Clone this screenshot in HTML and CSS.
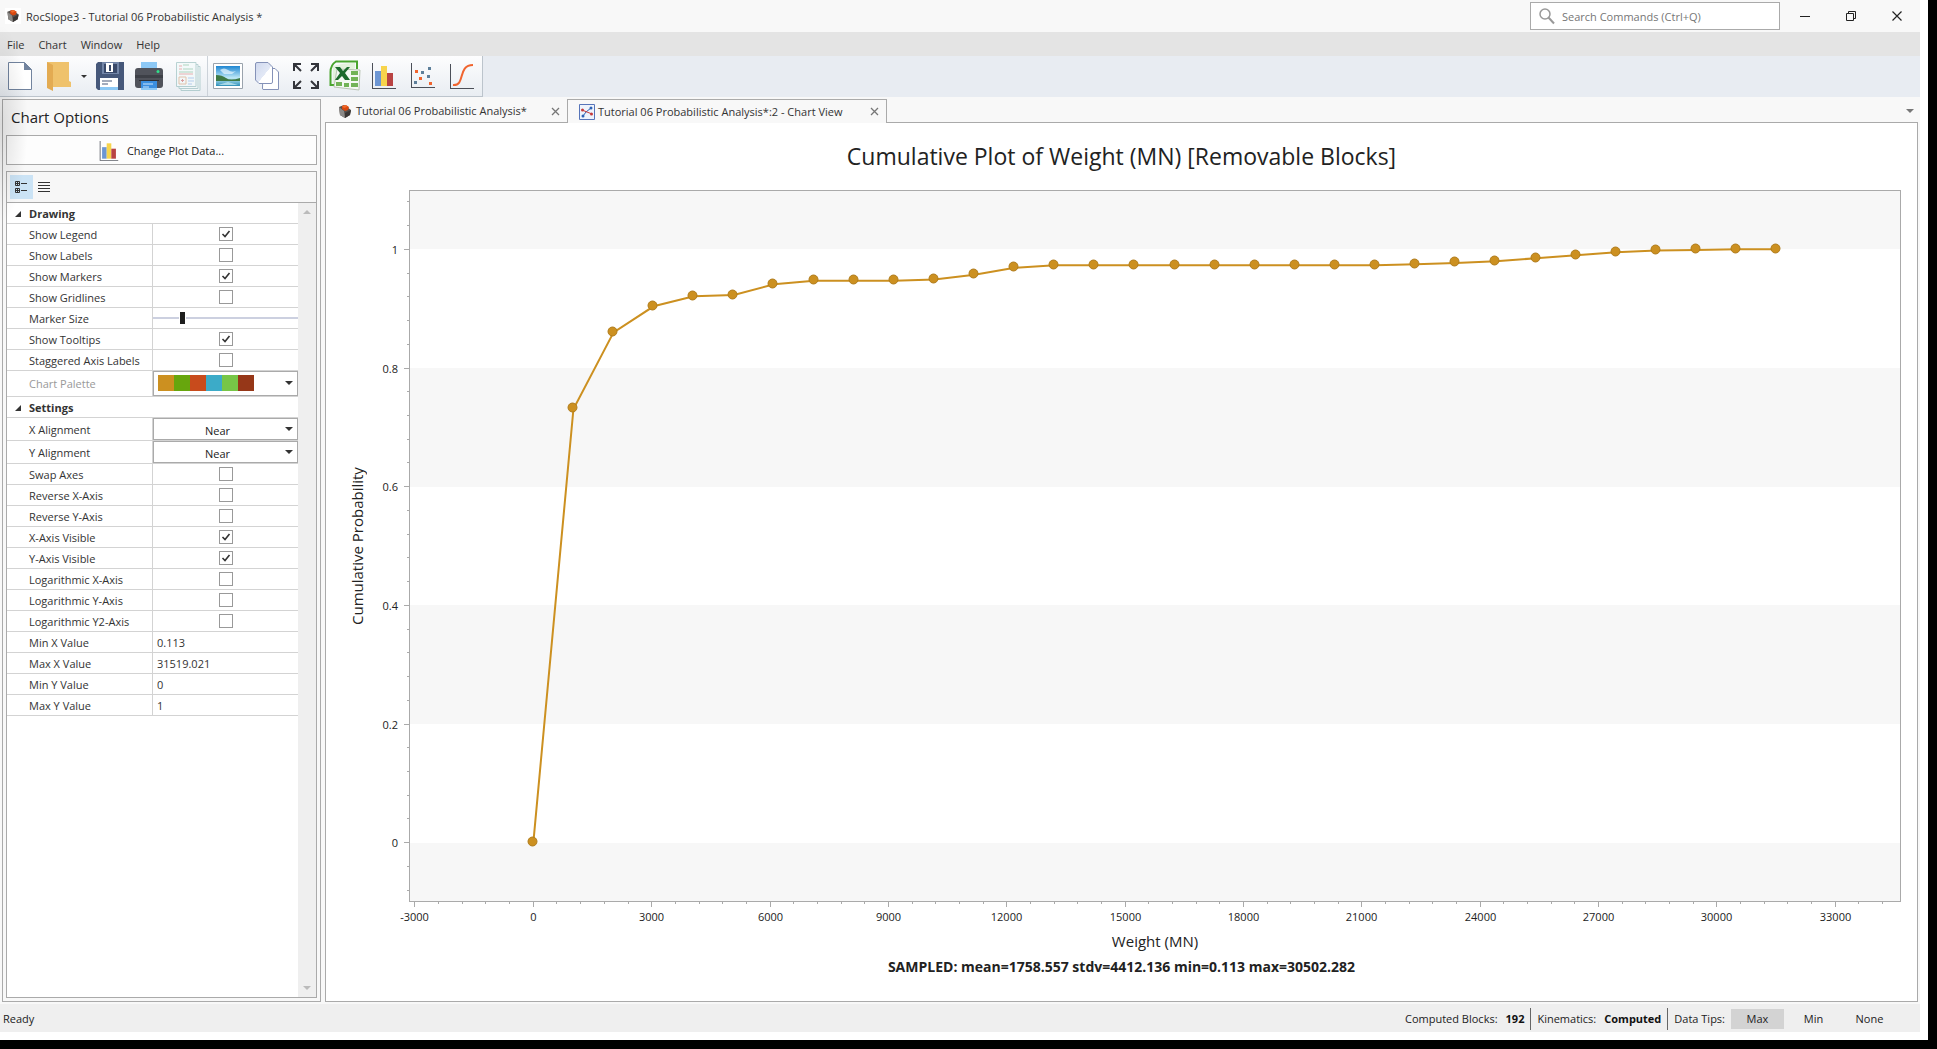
FILE: index.html
```html
<!DOCTYPE html>
<html lang="en">
<head>
<meta charset="utf-8">
<title>RocSlope3 - Tutorial 06 Probabilistic Analysis *</title>
<link rel="stylesheet" href="styles.css">
</head>
<body>
<svg class="defs" aria-hidden="true">
  <defs>
    <linearGradient id="sky" x1="0" y1="0" x2="0" y2="1"><stop offset="0" stop-color="#1e86d2"/><stop offset=".6" stop-color="#bfe9f7"/><stop offset="1" stop-color="#2e8fb8"/></linearGradient>
    <linearGradient id="sheet" x1="0" y1="0" x2="1" y2="1"><stop offset="0" stop-color="#cfd8ee"/><stop offset=".55" stop-color="#e3e9f6"/><stop offset=".56" stop-color="#fff"/></linearGradient>
    <symbol id="rock" viewBox="0 0 14 15">
      <path d="M1 3 6 1 13 6 12 11 7 14 2 11Z" fill="#55504d"/>
      <path d="M1 3 6 7 7 14 2 11Z" fill="#8b8987"/>
      <path d="M7 9 13 6 12 11 7 14Z" fill="#3a3634"/>
      <path d="M4 2 8 1 11 3 10 6 7 7 4 5Z" fill="#d9480f"/>
      <path d="M4 2 8 1 9 3 6 4Z" fill="#f26a2a"/>
    </symbol>
    <symbol id="bars" viewBox="0 0 24 26">
      <path d="M.5 0V25M0 25.5H24" stroke="#4b4f58" fill="none"/>
      <path d="M3 8h6v15H3z" fill="#6d96d3"/><path d="M9 3h6v20H9z" fill="#f7d44c"/><path d="M15 10h6v13h-6z" fill="#b94343"/>
    </symbol>
    <symbol id="cross" viewBox="0 0 9 9"><path d="M1 1 8 8M8 1 1 8" stroke="currentColor" stroke-width="1.3" fill="none"/></symbol>
    <symbol id="down" viewBox="0 0 8 4"><path d="M0 0H8L4 4Z" fill="currentColor"/></symbol>
  </defs>
</svg>
<div class="window">
  <header class="titlebar">
    <span class="app-icon"><svg width="14" height="14"><use href="#rock"/></svg></span>
    <h1>RocSlope3 - Tutorial 06 Probabilistic Analysis *</h1>
    <label class="search">
      <svg width="16" height="17" viewBox="0 0 16 17"><circle cx="6" cy="6" r="5" fill="none" stroke="#999" stroke-width="1.5"/><path d="M9.500 9.500 15 15.500" stroke="#999" stroke-width="2"/></svg>
      <input type="text" placeholder="Search Commands (Ctrl+Q)" aria-label="Search Commands">
    </label>
    <button class="winbtn" aria-label="Minimize"><svg width="10" height="10"><path d="M0 5.500H10" stroke="#222"/></svg></button>
    <button class="winbtn" aria-label="Restore"><svg width="10" height="10" fill="none" stroke="#222"><path d="M.5 2.500H7.500V9.500H.5ZM2.500 2.500V.5H9.500V7.500H7.500"/></svg></button>
    <button class="winbtn" aria-label="Close"><svg width="10" height="10"><path d="M.5 .5 9.500 9.500M9.500 .5 .5 9.500" stroke="#222" stroke-width="1.200"/></svg></button>
  </header>
  <nav class="menubar">
    <button>File</button><button>Chart</button><button>Window</button><button>Help</button>
  </nav>
  <div class="toolbar">
    <div class="tools">
      <button aria-label="New"><svg viewBox="0 0 32 32"><path d="M4.500 2.500H20.500L27.500 9.500V29.500H4.500Z" fill="#fff" stroke="#71839e"/><path d="M20 2V10H28Z" fill="#71839e"/></svg></button>
      <button aria-label="Open"><svg viewBox="0 0 32 32"><path d="M4 2H26V21L28 22V27H10Z" fill="#efc26c"/><path d="M4 2 10 5V31L4 28Z" fill="#e3ab52"/></svg></button>
      <button class="more" aria-label="Open recent"><svg class="caret" width="6" height="3" viewBox="0 0 8 4"><use href="#down"/></svg></button>
      <button aria-label="Save"><svg viewBox="0 0 32 32"><path d="M2 4 4 2H30V30H4L2 28Z" fill="#46587a"/><path d="M8 2H25V14H8Z" fill="#7386a8"/><path d="M10 4H23V13H10Z" fill="#39496a"/><path d="M12 3h7v9h-7z" fill="#fff"/><path d="M15 5h2v6h-2z" fill="#39496a"/><path d="M6 18H24V30H6Z" fill="#fff"/><path d="M6 27H24V30H6Z" fill="#8cc8f5"/><path d="M8 21H18M8 24H14" stroke="#46587a"/></svg></button>
      <button aria-label="Print"><svg viewBox="0 0 32 32"><path d="M8 2H24V10H8Z" fill="#8cc8f5"/><rect x="2" y="8" width="28" height="20" rx="3" fill="#50535b"/><path d="M2 15H30V18H2Z" fill="#3d4047"/><circle cx="25" cy="11.500" r="1.500" fill="#2fe08a"/><path d="M8 20H24V30H8Z" fill="#3b8fe0"/><path d="M6 20H26V21H6Z" fill="#2d3036"/><path d="M8 28H24V30H8Z" fill="#8cc8f5"/><path d="M10 24H20M10 27H16" stroke="#cfe6fb"/></svg></button>
      <button class="faded" aria-label="Copy report"><svg viewBox="0 0 32 32"><g fill="#f2fafa" stroke="#8fb9b9"><path d="M9 6.500H28V30.500H9Z"/><path d="M7 4.500H26V28.500H7Z"/><path d="M4.500 2.500H24V26.500H4.500Z"/></g><path d="M11 5H17M11 9H21M7 12H21" stroke="#7fbf9a"/><path d="M7 6h3M7 9h3M7 14H21" stroke="#e08080"/><path d="M7 17H14V24H7Z" fill="none" stroke="#d9a37a"/><path d="M9 20.500H12M10.500 19V22" stroke="#c66"/><path d="M16 18H22M16 21H22M16 24H20" stroke="#8db4e8"/></svg></button>
      <i class="sep"></i>
      <button aria-label="Export image"><svg viewBox="0 0 32 32"><path d="M1.500 3.500H30.500V28.500H1.500Z" fill="#fff" stroke="#9aa3ad"/><path d="M4 6H28V26H4Z" fill="url(#sky)"/><path d="M4 15Q10 15 14 18T28 18V21H4Z" fill="#3f7a45"/><path d="M8 10Q12 7 16 10T24 11L20 14H12Z" fill="#e8f6fd" opacity=".7"/><path d="M6 25 16 22 26 25Z" fill="#bfe6ef" opacity=".8"/></svg></button>
      <button aria-label="Copy"><svg viewBox="0 0 32 32"><g stroke="#8592b8"><path d="M12 8.500H24L27.500 12V29.500H12Q11.500 29.500 11.500 28Z" fill="#fff"/><path d="M6 2.500H17L21.500 7V22Q21.500 23.500 20 23.500H8L4.500 20V4Q4.500 2.500 6 2.500Z" fill="url(#sheet)"/></g></svg></button>
      <button aria-label="Zoom all"><svg viewBox="0 0 32 32" fill="none" stroke="#33353b" stroke-width="2"><path d="M4 11V4H11M4 4 11 11M21 4H28V11M28 4 21 11M4 21V28H11M4 28 11 21M28 21V28H21M28 28 21 21"/></svg></button>
      <button aria-label="Export to Excel"><svg viewBox="0 0 32 32"><path d="M28 9V1.500H7Q1.500 5 1.500 12V25H5" fill="none" stroke="#4aa52e" stroke-width="2"/><path d="M4 6Q14 3 26 3V8L4 24Z" fill="#e4f2dd"/><path d="M8 9 31 10 30 30 5 27Z" fill="#f4f8f2" stroke="#b9c4b4"/><path d="M22 11H29V15H22ZM22 17H29V21H22ZM22 23H29V27H22ZM15 23H20V27H15ZM7 22H13V26H7Z" fill="#72b356"/><path d="M6 7H11L14 11 18 7H21L16 13 21 20H16L13 16 9 20H6L11 13Z" fill="#1d6a2c"/></svg></button>
      <button aria-label="Histogram"><svg class="chart-icon"><use href="#bars"/></svg></button>
      <button aria-label="Scatter plot"><svg viewBox="0 0 32 32"><path d="M4.500 3V28M4 27.500H28" stroke="#4b4f58"/><path d="M8 10h3v3H8zM12 17h3v3h-3zM22 22h3v3h-3z" fill="#f0642e"/><path d="M21 7h3v3h-3zM14 11h3v3h-3zM20 15h3v3h-3zM7 21h3v3H7z" fill="#5d7f9a"/></svg></button>
      <button aria-label="Cumulative plot"><svg viewBox="0 0 32 32"><path d="M4.500 4V29M4 28.500H28" stroke="#4b4f58" fill="none"/><path d="M7 25C20 26 11 5 27 5" stroke="#f0642e" stroke-width="2" fill="none"/></svg></button>
    </div>
  </div>
  <main class="workspace">
    <aside class="options">
      <h2>Chart Options</h2>
      <button class="plot-data"><svg width="20" height="20"><use href="#bars"/></svg>Change Plot Data...</button>
      <section class="props">
        <div class="props-bar">
          <button class="active" aria-label="Categorized"><svg width="12" height="12" fill="none" stroke="#333"><path d="M.5 .5H4.500V4.500H.5ZM.5 7.500H4.500V11.500H.5ZM2.500 1V4M1 2.500H4M2.500 8V11M1 9.500H4"/><path d="M6 2.500H12M6 9.500H12"/></svg></button>
          <button aria-label="Alphabetical"><svg width="12" height="11" stroke="#333"><path d="M0 .5H12M0 3.500H12M0 6.500H12M0 9.500H12"/></svg></button>
        </div>
        <div class="props-body">
          <form class="grid">
            <h3><svg width="6" height="6"><path d="M6 0V6H0Z" fill="#333"/></svg>Drawing</h3>
            <div class="row"><label for="p1">Show Legend</label><span><input type="checkbox" id="p1" checked></span></div>
            <div class="row"><label for="p2">Show Labels</label><span><input type="checkbox" id="p2"></span></div>
            <div class="row"><label for="p3">Show Markers</label><span><input type="checkbox" id="p3" checked></span></div>
            <div class="row"><label for="p4">Show Gridlines</label><span><input type="checkbox" id="p4"></span></div>
            <div class="row"><label for="p5">Marker Size</label><span><input type="range" id="p5" min="0" max="100" value="19"></span></div>
            <div class="row"><label for="p6">Show Tooltips</label><span><input type="checkbox" id="p6" checked></span></div>
            <div class="row"><label for="p7">Staggered Axis Labels</label><span><input type="checkbox" id="p7"></span></div>
            <div class="row palette"><label for="p8">Chart Palette</label><span><button type="button" id="p8" aria-haspopup="listbox"><i></i><i></i><i></i><i></i><i></i><i></i><svg width="8" height="4"><use href="#down"/></svg></button></span></div>
            <h3><svg width="6" height="6"><path d="M6 0V6H0Z" fill="#333"/></svg>Settings</h3>
            <div class="row pick"><label for="p9">X Alignment</label><span><select id="p9"><option>Near</option></select><svg width="8" height="4"><use href="#down"/></svg></span></div>
            <div class="row pick"><label for="p10">Y Alignment</label><span><select id="p10"><option>Near</option></select><svg width="8" height="4"><use href="#down"/></svg></span></div>
            <div class="row"><label for="p11">Swap Axes</label><span><input type="checkbox" id="p11"></span></div>
            <div class="row"><label for="p12">Reverse X-Axis</label><span><input type="checkbox" id="p12"></span></div>
            <div class="row"><label for="p13">Reverse Y-Axis</label><span><input type="checkbox" id="p13"></span></div>
            <div class="row"><label for="p14">X-Axis Visible</label><span><input type="checkbox" id="p14" checked></span></div>
            <div class="row"><label for="p15">Y-Axis Visible</label><span><input type="checkbox" id="p15" checked></span></div>
            <div class="row"><label for="p16">Logarithmic X-Axis</label><span><input type="checkbox" id="p16"></span></div>
            <div class="row"><label for="p17">Logarithmic Y-Axis</label><span><input type="checkbox" id="p17"></span></div>
            <div class="row"><label for="p18">Logarithmic Y2-Axis</label><span><input type="checkbox" id="p18"></span></div>
            <div class="row"><label for="p19">Min X Value</label><span><input type="text" id="p19" value="0.113"></span></div>
            <div class="row"><label for="p20">Max X Value</label><span><input type="text" id="p20" value="31519.021"></span></div>
            <div class="row"><label for="p21">Min Y Value</label><span><input type="text" id="p21" value="0"></span></div>
            <div class="row"><label for="p22">Max Y Value</label><span><input type="text" id="p22" value="1"></span></div>
          </form>
          <div class="scrollbar"><svg width="8" height="4"><path d="M0 4H8L4 0Z" fill="#bbb"/></svg><svg width="8" height="4"><path d="M0 0H8L4 4Z" fill="#bbb"/></svg></div>
        </div>
      </section>
    </aside>
    <section class="documents">
      <div class="tabs">
        <div class="tab"><svg width="14" height="15"><use href="#rock"/></svg><a href="#model">Tutorial 06 Probabilistic Analysis*</a><button aria-label="Close tab"><svg width="9" height="9"><use href="#cross"/></svg></button></div>
        <div class="tab current"><svg width="16" height="16"><path d="M.5 .5H15.500V15.500H.5Z" fill="#eef3fc" stroke="#5674b9"/><path d="M4 12 7 8 12 4" stroke="#2c62b5" fill="none"/><path d="M3 6 8 8 13 10" stroke="#c43b3b" fill="none"/><g fill="#2c62b5"><circle cx="4" cy="12" r="1.500"/><circle cx="12" cy="4" r="1.500"/></g><g fill="#c43b3b"><circle cx="3.500" cy="6" r="1.500"/><circle cx="12.500" cy="10" r="1.500"/></g></svg><a href="#chart">Tutorial 06 Probabilistic Analysis*:2 - Chart View</a><button aria-label="Close tab"><svg width="9" height="9"><use href="#cross"/></svg></button></div>
        <button class="tab-list" aria-label="Open documents"><svg width="8" height="4"><use href="#down"/></svg></button>
      </div>
      <article class="chart" id="chart">
        <h2>Cumulative Plot of Weight (MN) [Removable Blocks]</h2>
        <div class="plot-row">
          <div class="y-title">Cumulative Probability</div>
          <div class="plot"><svg id="plot" role="img" aria-label="Cumulative probability against weight"></svg></div>
        </div>
        <p class="x-title">Weight (MN)</p>
        <p class="summary">SAMPLED: mean=1758.557 stdv=4412.136 min=0.113 max=30502.282</p>
      </article>
    </section>
  </main>
  <footer class="statusbar">
    <span class="ready">Ready</span>
    <span>Computed Blocks:</span><b>192</b><i></i>
    <span>Kinematics:</span><b>Computed</b><i></i>
    <span>Data Tips:</span>
    <div class="tips"><button class="on">Max</button><button>Min</button><button>None</button></div>
  </footer>
</div>
<script src="chart.js"></script>
</body>
</html>
```
FILE: styles.css
```css
* { box-sizing: border-box; }
body {
  margin: 0;
  padding: 0 9px 9px 0;
  height: 100vh;
  background: #000;
  color: #333;
  font: 11px/16px "Open Sans", "Noto Sans", sans-serif;
}
h1, h2, h3, p { margin: 0; font-weight: 400; }
button, input, select { font: inherit; color: inherit; margin: 0; }
button { border: 0; padding: 0; background: none; display: flex; align-items: center; justify-content: center; }
a { color: inherit; text-decoration: none; }
svg { display: block; flex: none; }
.defs { position: absolute; width: 0; height: 0; }

.window {
  position: relative;
  display: flex;
  flex-direction: column;
  height: 100%;
  min-height: 900px;
  padding: 0 8px 8px 0;
  background: #fff;
}
.window::before {
  content: "";
  position: absolute;
  left: 0;
  top: 24px;
  width: 28px;
  height: 200px;
  background: radial-gradient(ellipse at left, rgba(0, 0, 0, .12), transparent 70%);
  pointer-events: none;
}

.titlebar { display: flex; align-items: center; height: 32px; background: #f8f8f8; }
.app-icon { display: grid; place-items: center; width: 16px; height: 16px; margin: 0 5px; background: #fff; }
.titlebar h1 { flex: 1; padding-top: 2px; font-size: 11px; }
.search {
  display: flex; align-items: center; gap: 7px;
  width: 250px; height: 28px; padding: 0 8px; margin-right: 2px;
  border: 1px solid #aaa; background: #fff;
}
.search input { flex: 1; min-width: 0; border: 0; padding: 1px 0 0; outline: 0; background: none; }
.search input::placeholder { color: #767676; opacity: 1; }
.winbtn { width: 46px; height: 32px; }

.menubar { display: flex; gap: 14px; height: 24px; padding: 2px 0 0 7px; background: #e4e4e4; }

.toolbar { height: 41px; background: #e8ecf2; }
.tools {
  display: flex; align-items: center;
  width: 483px; height: 41px;
  border: solid #bcc4cc; border-width: 0 1px 1px 0;
  background: linear-gradient(#fdfdfe, #e9edf2);
}
.tools button { width: 39px; height: 40px; }
.tools svg { width: 32px; height: 32px; }
.tools .more { width: 12px; }
.tools .caret { width: 6px; height: 3px; }
.tools .chart-icon { width: 24px; height: 26px; }
.tools .faded { opacity: .6; }
.tools .sep { width: 1px; height: 40px; background: #ccd2d9; }

.workspace { flex: 1; display: flex; gap: 4px; min-height: 0; padding: 2px; background: #f8f8f8; }
.options { display: flex; flex-direction: column; width: 319px; padding: 3px; border: 1px solid #aaa; }
.options h2 { padding: 2px 5px 0; height: 32px; font-size: 15px; line-height: 24px; color: #222; }
.plot-data { gap: 8px; height: 30px; padding-top: 1px; border: 1px solid #aaa; background: #fdfdfd; color: #222; }
.props { flex: 1; display: flex; flex-direction: column; margin-top: 6px; border: 1px solid #aaa; background: #fff; }
.props-bar { display: flex; height: 31px; padding: 3px; background: #f7f7f7; border-bottom: 1px solid #aaa; }
.props-bar button { width: 23px; height: 24px; padding-right: 1px; }
.props-bar .active { background: #cbe3f5; }
.props-body { flex: 1; display: flex; }
.grid { flex: 1; }
.grid h3 {
  display: flex; align-items: center; gap: 8px; height: 21px; padding: 2px 0 0 8px;
  border-bottom: 1px solid #d3d3d3; font-size: 11px; font-weight: 700;
}
.row { display: flex; height: 21px; border-bottom: 1px solid #d3d3d3; line-height: 22px; }
.row label { width: 146px; padding-left: 22px; border-right: 1px solid #d3d3d3; white-space: nowrap; }
.row > span { flex: 1; display: grid; place-items: center; }
.row input[type=checkbox] { appearance: none; width: 14px; height: 14px; border: 1px solid #999; background: #fff; }
.row input[type=checkbox]:checked {
  background: url("data:image/svg+xml,%3Csvg xmlns='http://www.w3.org/2000/svg' viewBox='0 0 12 12'%3E%3Cpath d='M2.500 6 5 8.500 9.500 3' fill='none' stroke='%23333' stroke-width='1.600'/%3E%3C/svg%3E");
}
.row input[type=text] { width: 100%; height: 20px; border: 0; padding: 2px 4px 0; outline: 0; background: none; }
.row input[type=range] { appearance: none; width: 100%; height: 14px; background: linear-gradient(#ccd0e0, #ccd0e0) center / 100% 2px no-repeat; }
.row input[type=range]::-webkit-slider-thumb { appearance: none; width: 7px; height: 12px; background: #1e1e1e; border: solid #fff; border-width: 0 1px; }
.palette { height: 26px; line-height: 26px; color: #999; }
.palette button { width: 100%; height: 25px; justify-content: flex-start; padding: 0 4px 2px; border: 1px solid #aaa; color: #333; }
.palette i { width: 16px; height: 16px; }
.palette i:nth-child(1) { background: #cc9020; }
.palette i:nth-child(2) { background: #67a60d; }
.palette i:nth-child(3) { background: #c84b1c; }
.palette i:nth-child(4) { background: #3cabc8; }
.palette i:nth-child(5) { background: #77c647; }
.palette i:nth-child(6) { background: #963718; }
.palette svg { margin-left: auto; }
.pick { height: 23px; line-height: 24px; }
.pick select { grid-area: 1 / 1; width: 100%; height: 22px; appearance: none; padding: 0 20px 0 4px; border: 1px solid #aaa; border-radius: 0; background: #fff; text-align: center; text-align-last: center; color: #222; }
.pick svg { grid-area: 1 / 1; justify-self: end; margin-right: 5px; pointer-events: none; }
.scrollbar { display: flex; flex-direction: column; justify-content: space-between; align-items: center; width: 18px; padding: 7px 0; background: #efefef; }

.documents { flex: 1; display: flex; flex-direction: column; min-width: 0; }
.tabs { display: flex; height: 23px; }
.tab { display: flex; align-items: center; width: 242px; height: 24px; padding: 0 7px 0 13px; gap: 4px; }
.tab button { margin-left: auto; color: #777; }
.current { position: relative; width: 320px; padding: 0 7px 0 11px; gap: 3px; border: 1px solid #aaa; border-bottom: 0; background: #f8f8f8; }
.tab-list { margin: 0 4px 0 auto; color: #777; }
.chart { flex: 1; display: flex; flex-direction: column; min-height: 0; border: 1px solid #aaa; background: #fff; color: #222; text-align: center; }
.chart h2 { height: 67px; padding-top: 17px; font-size: 23px; line-height: 32px; }
.plot-row { flex: 1; display: flex; min-height: 0; padding-right: 16px; }
.y-title { width: 83px; padding: 0 19px 0 40px; writing-mode: vertical-rl; transform: rotate(180deg); font-size: 15px; line-height: 24px; }
.plot { flex: 1; min-width: 0; min-height: 0; }
.plot svg { width: 100%; height: 100%; overflow: visible; }
.x-title { padding: 27px 16px 0 83px; font-size: 15px; line-height: 24px; }
.summary { height: 48px; padding-top: 6px; font-size: 14px; line-height: 16px; font-weight: 700; }

.band { fill: #f7f7f7; }
.frame { fill: none; stroke: #aaa; }
.tick { stroke: #aaa; }
.tick-text { fill: #222; }
.curve { fill: none; stroke: #cc9020; stroke-width: 2; }
.marker { fill: #cc9020; stroke: #b07c1c; }

.statusbar { display: flex; align-items: center; height: 28px; padding: 1px 24px 0 3px; background: #efefef; color: #222; }
.statusbar .ready { flex: 1; }
.statusbar b { margin-left: 8px; color: #111; }
.statusbar i { width: 1px; height: 22px; margin: 0 6px; background: #666; }
.tips { display: flex; gap: 3px; margin-left: 6px; }
.tips button { width: 53px; height: 20px; }
.tips .on { background: #d3d3d3; }
```
FILE: chart.js
```js
const probabilities = [
  0, .731, .860, .904, .921, .923, .941, .947, .947, .947, .949, .957, .969, .973, .973, .973,
  .973, .973, .973, .973, .973, .973, .975, .977, .980, .985, .990, .995, .998, .999, 1, 1
];
const minX = 0.113, maxX = 31519.021;
const xRange = [-3151.8, 34671], yRange = [-0.1, 1.1];
const svg = document.getElementById('plot');

function add(name, attrs, text) {
  const node = document.createElementNS('http://www.w3.org/2000/svg', name);
  for (const key in attrs) node.setAttribute(key, attrs[key]);
  if (text !== undefined) node.textContent = text;
  svg.appendChild(node);
}

function draw() {
  const w = svg.parentNode.clientWidth, h = svg.parentNode.clientHeight;
  const px = v => (v - xRange[0]) / (xRange[1] - xRange[0]) * w;
  const py = v => h - (v - yRange[0]) / (yRange[1] - yRange[0]) * h;
  const snap = v => Math.floor(v) + .5;
  svg.replaceChildren();

  for (const [lo, hi] of [[1, 1.1], [.6, .8], [.2, .4], [-.1, 0]]) {
    const top = Math.round(py(hi)), bottom = Math.round(py(lo));
    add('rect', { class: 'band', x: 0, y: top, width: w, height: bottom - top });
  }
  add('rect', { class: 'frame', x: .5, y: .5, width: w - 1, height: h - 1 });

  for (let i = -5; i <= 57; i++) {
    const x = snap(px(i * 600)), major = i % 5 === 0;
    add('path', { class: 'tick', d: `M${x} ${h}v${major ? 5 : 2}` });
    if (major) add('text', { class: 'tick-text', x, y: h + 19, 'text-anchor': 'middle' }, i * 600);
  }
  for (let i = -2; i <= 27; i++) {
    const y = snap(py(i * .04)), major = i % 5 === 0;
    add('path', { class: 'tick', d: `M0 ${y}h${major ? -5 : -2}` });
    if (major) add('text', { class: 'tick-text', x: -11, y: y + 4, 'text-anchor': 'end' }, +(i * .04).toFixed(1));
  }

  const points = probabilities.map((p, i) => [px(minX + i * (maxX - minX) / 31), py(p)]);
  add('polyline', { class: 'curve', points: points.map(p => p.join()).join(' ') });
  for (const [x, y] of points) {
    add('circle', { class: 'marker', cx: Math.floor(x) - .5, cy: Math.floor(y) - .5, r: 4.5 });
  }
}

new ResizeObserver(draw).observe(svg.parentNode);
draw();
```
